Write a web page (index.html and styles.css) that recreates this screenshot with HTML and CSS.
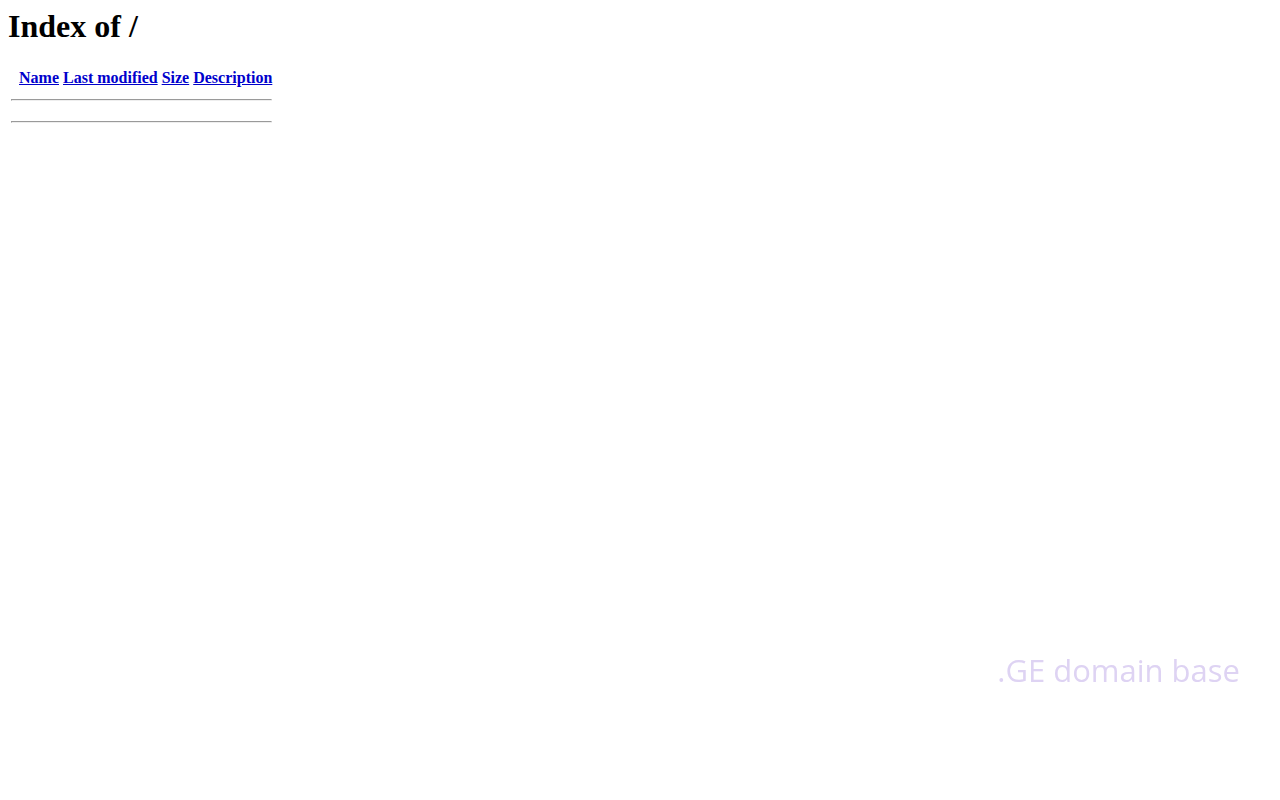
FILE: index.html
```html
<!DOCTYPE html>
<html lang="en">
<head>
  <meta charset="UTF-8" />
  <meta name="viewport" content="width=device-width, initial-scale=1" />
  <title>Index of /</title>
  <link rel="stylesheet" href="styles.css">
</head>
<body>

<h1>Index of /</h1>

<table class="listing">
  <tr>
    <th class="icon-col"></th>
    <th><a href="?C=N;O=D">Name</a></th>
    <th><a href="?C=M;O=A">Last modified</a></th>
    <th><a href="?C=S;O=A">Size</a></th>
    <th><a href="?C=D;O=A">Description</a></th>
  </tr>
  <tr><th colspan="5"><hr></th></tr>
  <tr><th colspan="5"><hr></th></tr>
</table>

<div class="watermark">.GE domain base</div>

</body>
</html>
```

FILE: styles.css
```css
body {
  margin: 8px;
  font-family: "Liberation Serif", "Times New Roman", serif;
  font-size: 16px;
  background: #fff;
  color: #000;
}
h1 {
  margin: 0 0 21px;
  font-size: 32px;
  line-height: 37px;
}
.listing {
  border-spacing: 2px;
}
.listing th {
  padding: 1px;
}
.listing a {
  color: #0000cc;
}
.icon-col {
  width: 4px;
}
.listing hr {
  margin: 8px 0;
}
.watermark {
  position: fixed;
  right: 40px;
  bottom: 108px;
  font-family: "Open Sans", "Noto Sans", sans-serif;
  font-size: 31px;
  line-height: 44px;
  color: #ded3f3;
}
```
